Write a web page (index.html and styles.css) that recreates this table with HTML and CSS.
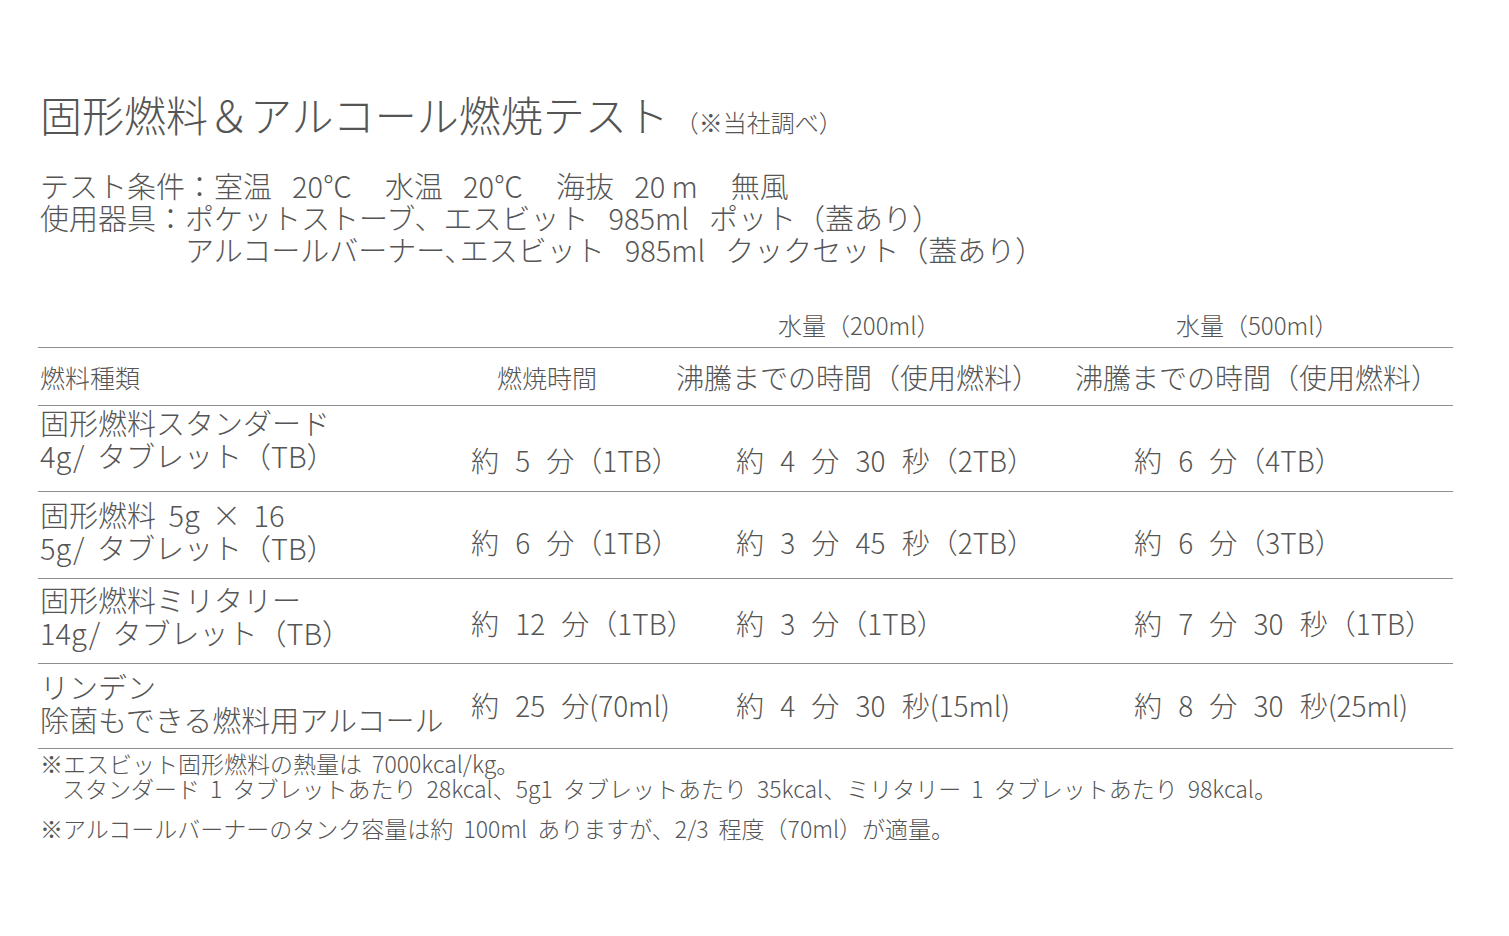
FILE: index.html
```html
<!DOCTYPE html>
<html lang="ja">
<head>
<meta charset="utf-8">
<title>固形燃料＆アルコール燃焼テスト</title>
<link rel="stylesheet" href="styles.css">
</head>
<body>
<main class="page">
  <h1 class="title">固形燃料＆アルコール燃焼テスト<span class="title-note">（※当社調べ）</span></h1>

  <div class="conditions">
    <div class="cond-row">
      <span class="cond-label">テスト条件：</span>
      <span class="cond-body">室温<span class="gap-s"></span>20℃<span class="gap-l"></span>水温<span class="gap-s"></span>20℃<span class="gap-l"></span>海抜<span class="gap-s"></span>20 m<span class="gap-l"></span>無風</span>
    </div>
    <div class="cond-row">
      <span class="cond-label">使用器具：</span>
      <span class="cond-body">
        <span class="cond-line">ポケットストーブ、エスビット<span class="gap-s"></span>985ml<span class="gap-s"></span>ポット（蓋あり）</span>
        <span class="cond-line">アルコールバーナー､エスビット<span class="gap-s"></span>985ml<span class="gap-s"></span>クックセット（蓋あり）</span>
      </span>
    </div>
  </div>

  <section class="table">
    <div class="row row-top">
      <div class="cell"></div>
      <div class="cell"></div>
      <div class="cell top-c3">水量（200ml）</div>
      <div class="cell top-c4">水量（500ml）</div>
    </div>
    <div class="row row-head">
      <div class="cell head-c1">燃料種類</div>
      <div class="cell head-c2">燃焼時間</div>
      <div class="cell head-c3">沸騰までの時間（使用燃料）</div>
      <div class="cell head-c4">沸騰までの時間（使用燃料）</div>
    </div>
    <div class="row row-1">
      <div class="cell name"><span>固形燃料スタンダード</span><span>4g/ タブレット（TB）</span></div>
      <div class="cell val c2">約 5 分（1TB）</div>
      <div class="cell val c3">約 4 分 30 秒（2TB）</div>
      <div class="cell val c4">約 6 分（4TB）</div>
    </div>
    <div class="row row-2">
      <div class="cell name"><span>固形燃料 5g × 16</span><span>5g/ タブレット（TB）</span></div>
      <div class="cell val c2">約 6 分（1TB）</div>
      <div class="cell val c3">約 3 分 45 秒（2TB）</div>
      <div class="cell val c4">約 6 分（3TB）</div>
    </div>
    <div class="row row-3">
      <div class="cell name"><span>固形燃料ミリタリー</span><span>14g/ タブレット（TB）</span></div>
      <div class="cell val c2">約 12 分（1TB）</div>
      <div class="cell val c3">約 3 分（1TB）</div>
      <div class="cell val c4">約 7 分 30 秒（1TB）</div>
    </div>
    <div class="row row-4">
      <div class="cell name"><span>リンデン</span><span>除菌もできる燃料用アルコール</span></div>
      <div class="cell val c2">約 25 分(70ml)</div>
      <div class="cell val c3">約 4 分 30 秒(15ml)</div>
      <div class="cell val c4">約 8 分 30 秒(25ml)</div>
    </div>
  </section>

  <div class="notes">
    <p class="note">※エスビット固形燃料の熱量は 7000kcal/kg。</p>
    <p class="note indent">スタンダード 1 タブレットあたり 28kcal、5g1 タブレットあたり 35kcal、ミリタリー 1 タブレットあたり 98kcal。</p>
    <p class="note gap">※アルコールバーナーのタンク容量は約 100ml ありますが、2/3 程度（70ml）が適量。</p>
  </div>
</main>
</body>
</html>
```

FILE: styles.css
```css
html, body {
  margin: 0;
  padding: 0;
  background: #ffffff;
}

body {
  font-family: "Noto Sans CJK JP", "Noto Sans", sans-serif;
  font-weight: 300;
  color: #555555;
}

.page {
  width: 1415px;
  padding: 89px 0 0 38px;
}

.title {
  margin: 0 0 0 2px;
  font-size: 42px;
  font-weight: 300;
  line-height: 50px;
  display: flex;
  align-items: baseline;
}

.title-note {
  font-size: 24px;
  margin-left: 6px;
}

.conditions {
  margin: 22px 0 0 2px;
  font-size: 29px;
  line-height: 32px;
}

.cond-row {
  display: flex;
}

.cond-label {
  flex: none;
}

.cond-body {
  display: flex;
  flex-direction: column;
}

.cond-row:first-child .cond-body {
  display: block;
}

.cond-line {
  display: block;
}

.gap-s {
  display: inline-block;
  width: 20px;
}

.gap-l {
  display: inline-block;
  width: 33px;
}

.table {
  margin-top: 45px;
}

.row {
  display: grid;
  grid-template-columns: 420px 180px 437px 378px;
  border-bottom: 1.5px solid #8e8e8e;
}

.cell {
  white-space: nowrap;
}

.row-top {
  height: 37px;
  font-size: 24px;
  line-height: 30px;
}

.top-c3 { padding-left: 140px; }
.top-c4 { padding-left: 101px; }

.row-head {
  height: 57px;
  align-items: center;
}

.head-c1 { font-size: 25px; padding-left: 2px; }
.head-c2 { font-size: 25px; padding-left: 39px; }
.head-c3 { font-size: 28px; padding-left: 38px; }
.head-c4 { font-size: 28px; padding-left: 0; }

.name {
  display: flex;
  flex-direction: column;
  font-size: 29px;
  line-height: 33px;
  padding-left: 2px;
  word-spacing: 6px;
}

.val {
  font-size: 28px;
  line-height: 33px;
  word-spacing: 10px;
}

.c2 { padding-left: 13px; }
.c3 { padding-left: 98px; }
.c4 { padding-left: 59px; }

.row-1 { height: 85px; }
.row-1 .name { padding-top: 0; }
.row-1 .val { padding-top: 38px; }

.row-2 { height: 86px; }
.row-2 .name { padding-top: 6px; }
.row-2 .val { padding-top: 34px; }

.row-3 { height: 84px; }
.row-3 .name { padding-top: 4px; }
.row-3 .val { padding-top: 28px; }

.row-4 { height: 84px; }
.row-4 .name { padding-top: 6px; }
.row-4 .val { padding-top: 25px; }

.notes {
  padding: 2px 0 0 2px;
  font-size: 23px;
  line-height: 25px;
  word-spacing: 5px;
}

.note {
  margin: 0;
  white-space: nowrap;
}

.note.indent {
  padding-left: 22px;
}

.note.gap {
  margin-top: 15px;
}
```
